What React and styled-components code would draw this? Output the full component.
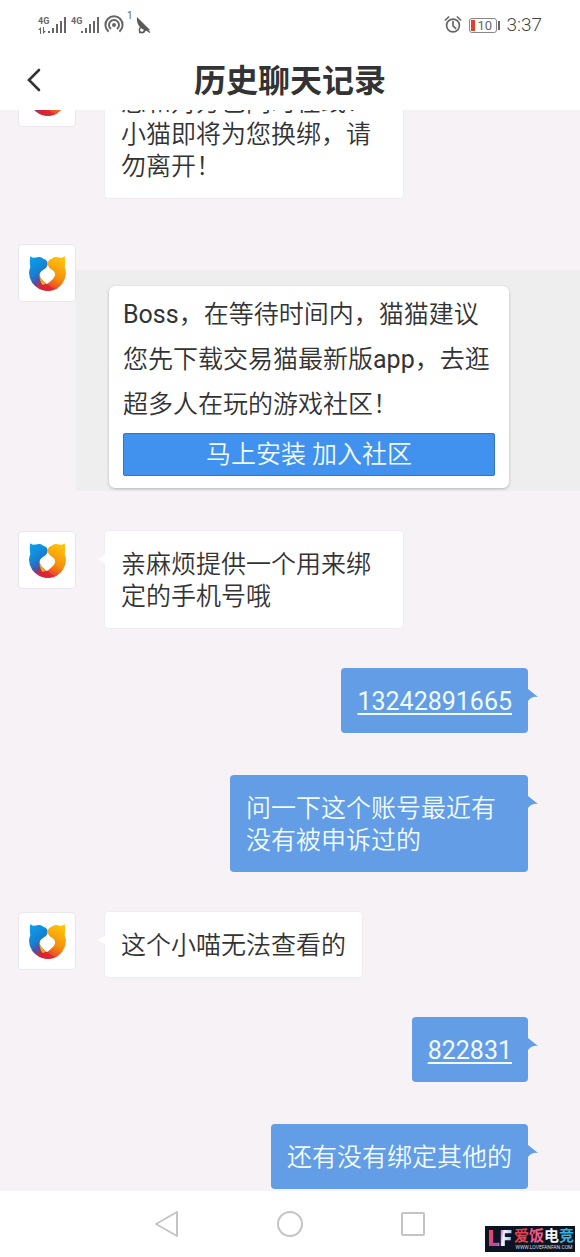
import React from "react";
import styled, { createGlobalStyle } from "styled-components";

const messages = [
  { id: 1, from: "agent", text: "您和对方已同时在线！小猫即将为您换绑，请勿离开！", noTail: true },
  { id: 2, from: "promo" },
  { id: 3, from: "agent", text: "亲麻烦提供一个用来绑定的手机号哦" },
  { id: 4, from: "me", text: "13242891665", link: true },
  { id: 5, from: "me", text: "问一下这个账号最近有没有被申诉过的" },
  { id: 6, from: "agent", text: "这个小喵无法查看的" },
  { id: 7, from: "me", text: "822831", link: true },
  { id: 8, from: "me", text: "还有没有绑定其他的" },
];

function Signal({ arrows }) {
  return (
    <SignalBox>
      <SignalType>
        4G
        <svg width="8" height="7" viewBox="0 0 8 7" fill="#666">
          {arrows && <path d="M2 7V3H0l3-3v7zM5 0v7l3-3H6V0z" />}
        </svg>
      </SignalType>
      <svg width="18" height="18" viewBox="0 0 18 18" fill="#666">
        <rect x="0" y="15" width="2" height="2" />
        <rect x="4" y="12" width="2" height="5" />
        <rect x="8" y="8" width="2" height="9" />
        <rect x="12" y="5" width="2" height="12" />
        <rect x="16" y="1" width="2" height="16" />
      </svg>
    </SignalBox>
  );
}

function HotspotIcon() {
  return (
    <svg width="20" height="20" viewBox="0 0 20 20" fill="none" stroke="#666" strokeWidth="2">
      <circle cx="10" cy="10" r="2" fill="#666" stroke="none" />
      <path d="M7 14a5 5 0 1 1 6 0" />
      <path d="M4.6 16.6a8.6 8.6 0 1 1 10.8 0" />
    </svg>
  );
}

function SatelliteIcon() {
  return (
    <svg width="16" height="18" viewBox="0 0 16 18" fill="#5a5a5a">
      <path d="M1 1 14 14l-3 1C4 13 0 8 1 1z" />
      <circle cx="6" cy="14" r="2.6" fill="none" stroke="#5a5a5a" strokeWidth="1.4" />
      <path d="M3 16.5h4l3-3 4 3" fill="none" stroke="#5a5a5a" strokeWidth="1.4" />
    </svg>
  );
}

function AlarmIcon() {
  return (
    <svg width="18" height="18" viewBox="0 0 18 18" fill="none" stroke="#666" strokeWidth="1.7">
      <circle cx="9" cy="9.5" r="6.4" />
      <path d="M9 5.5v4.4l2.6 2.4M1.4 4 4.6 1M16.6 4l-3.2-3" strokeLinecap="round" />
    </svg>
  );
}

function CatLogo() {
  return (
    <svg width="39" height="37" viewBox="0 0 118 110">
      <defs>
        <linearGradient id="blue" x1="0" y1="0" x2="0.4" y2="1">
          <stop offset="0" stopColor="#0aa4ee" />
          <stop offset="0.55" stopColor="#1680d2" />
          <stop offset="0.8" stopColor="#5a4c9c" />
          <stop offset="0.96" stopColor="#d3243c" />
        </linearGradient>
        <linearGradient id="gold" x1="0.6" y1="0" x2="0.25" y2="1">
          <stop offset="0" stopColor="#fdc20c" />
          <stop offset="0.55" stopColor="#f68f0c" />
          <stop offset="0.85" stopColor="#ea4a28" />
          <stop offset="1" stopColor="#d92238" />
        </linearGradient>
      </defs>
      <path
        fill="url(#blue)"
        d="M7 3 15 7Q24 7 32 5 42 4 46 10 55 11 59 20V30Q56 38 48 43 35 50 35 60 38 74 59 88V107Q30 107 13 84-3 58 7 36 4 18 7 3z"
      />
      <path
        fill="url(#gold)"
        d="M111 3 103 7Q94 7 86 5 76 4 72 10 64 11 60 20V30Q63 38 71 43 83 50 82 60 78 73 48 94L40 103Q82 118 105 84 121 58 111 36 114 18 111 3z"
      />
      <path fill="#fff" d="M47 44Q53 39 59 39 65 39 71 44V50H47z" />
      <path fill="#f3a712" d="M35 60Q34 76 44 90L56 86Q39 74 35 60z" />
      <path fill="#d92238" opacity="0.75" d="M38 102Q44 92 60 86 68 98 82 102 60 112 38 102z" />
    </svg>
  );
}

function ChatAvatar() {
  return (
    <Avatar>
      <CatLogo />
    </Avatar>
  );
}

function Promo() {
  return (
    <PromoRow>
      <ChatAvatar />
      <PromoPanel>
        <PromoCard>
          <PromoText>
            <Latin>Boss</Latin>，在等待时间内，猫猫建议您先下载交易猫最新版<Latin>app</Latin>，去逛超多人在玩的游戏社区！
          </PromoText>
          <PromoButton type="button">马上安装 加入社区</PromoButton>
        </PromoCard>
      </PromoPanel>
    </PromoRow>
  );
}

function Message({ message }) {
  if (message.from === "promo") {
    return <Promo />;
  }
  if (message.from === "me") {
    return (
      <MyRow>
        <MyBubble>
          {message.link ? <NumberLink href={`tel:${message.text}`}>{message.text}</NumberLink> : message.text}
          <MyTail viewBox="0 0 10 12">
            <path d="M0 0 10 8Q4 7 0 12z" fill="#639de5" />
          </MyTail>
        </MyBubble>
      </MyRow>
    );
  }
  return (
    <AgentRow>
      <ChatAvatar />
      <AgentBubble>
        {message.text}
        {!message.noTail && (
          <AgentTail viewBox="0 0 9 14">
            <path d="M9 0Q7 5 0 7q7 2 9 7z" fill="#fff" />
          </AgentTail>
        )}
      </AgentBubble>
    </AgentRow>
  );
}

export default function App() {
  return (
    <Screen>
      <GlobalStyle />
      <StatusBar>
        <StatusGroup>
          <Signal arrows />
          <Signal />
          <HotspotIcon />
          <HotspotCount>1</HotspotCount>
          <SatelliteIcon />
        </StatusGroup>
        <StatusGroup $gap="7px">
          <AlarmIcon />
          <Battery>
            <BatteryLevel />
            10
          </Battery>
          <Clock>3:37</Clock>
        </StatusGroup>
      </StatusBar>
      <Header>
        <BackButton type="button" aria-label="返回">
          <svg width="14" height="24" viewBox="0 0 14 24" fill="none" stroke="#333" strokeWidth="2.6">
            <path d="M12 2 2 12l10 10" strokeLinecap="round" />
          </svg>
        </BackButton>
        <Title>历史聊天记录</Title>
      </Header>
      <Chat>
        <History>
          {messages.map((message) => (
            <Message key={message.id} message={message} />
          ))}
        </History>
      </Chat>
      <NavBar>
        <NavButton type="button" aria-label="后退">
          <svg width="28" height="28" viewBox="0 0 28 28">
            <path d="M24 2v24L3 14z" />
          </svg>
        </NavButton>
        <NavButton type="button" aria-label="主页">
          <svg width="28" height="28" viewBox="0 0 28 28">
            <circle cx="14" cy="14" r="12" />
          </svg>
        </NavButton>
        <NavButton type="button" aria-label="最近任务">
          <svg width="28" height="28" viewBox="0 0 28 28">
            <rect x="3" y="3" width="22" height="22" rx="1" />
          </svg>
        </NavButton>
      </NavBar>
      <Watermark>
        <Monogram>LF</Monogram>
        <WatermarkText>
          <WatermarkName>
            <Glyph $color="#e8404e">爱</Glyph>
            <Glyph $color="#ee5a8c">饭</Glyph>
            <Glyph $color="#f4f4f8">电</Glyph>
            <Glyph $color="#35b4e0">竞</Glyph>
          </WatermarkName>
          <WatermarkUrl>WWW.LOVEFANFAN.COM</WatermarkUrl>
        </WatermarkText>
      </Watermark>
    </Screen>
  );
}

const GlobalStyle = createGlobalStyle`
  * {
    box-sizing: border-box;
  }

  body {
    margin: 0;
    font-family: Roboto, "Noto Sans CJK SC", sans-serif;
    color: #333;
    background-color: #fff;
  }

  button {
    padding: 0;
    border: none;
    background: none;
    font-family: inherit;
    cursor: pointer;
  }

  svg {
    display: block;
    flex: none;
  }
`;

const Screen = styled.div`
  position: relative;
  display: flex;
  flex-direction: column;
  width: 100%;
  height: 100vh;
`;

const StatusBar = styled.div`
  display: flex;
  flex: none;
  justify-content: space-between;
  align-items: center;
  height: 50px;
  padding: 0 38px;
`;

const StatusGroup = styled.div`
  display: flex;
  align-items: center;
  gap: ${(props) => props.$gap || "5px"};
`;

const SignalBox = styled.div`
  display: flex;
  align-items: flex-end;
`;

const SignalType = styled.span`
  display: flex;
  flex-direction: column;
  width: 10px;
  font-size: 9px;
  line-height: 11px;
  font-weight: 700;
  color: #666;
`;

const HotspotCount = styled.span`
  align-self: flex-start;
  margin: -4px -2px 0 -2px;
  font-size: 10px;
  line-height: 10px;
  color: #666;
`;

const Battery = styled.div`
  position: relative;
  display: flex;
  align-items: center;
  gap: 2px;
  width: 28px;
  height: 15px;
  margin-right: 2px;
  padding: 1px;
  border: 1px solid #888;
  border-radius: 3px;
  font-size: 13px;
  color: #666;

  &::after {
    content: "";
    position: absolute;
    right: -4px;
    top: 2px;
    width: 2px;
    height: 9px;
    background-color: #666;
  }
`;

const BatteryLevel = styled.span`
  width: 4px;
  height: 11px;
  background-color: #e0402c;
`;

const Clock = styled.span`
  font-size: 19px;
  line-height: 20px;
  font-weight: 300;
  color: #444;
`;

const Header = styled.header`
  display: grid;
  grid-template-columns: 80px 1fr 80px;
  flex: none;
  align-items: center;
  height: 60px;
`;

const BackButton = styled.button`
  display: flex;
  align-items: center;
  height: 60px;
  padding-left: 27px;
`;

const Title = styled.h1`
  margin: 0;
  padding-top: 2px;
  font-size: 32px;
  line-height: 58px;
  font-weight: 700;
  text-align: center;
`;

const Chat = styled.main`
  display: flex;
  flex-direction: column-reverse;
  flex: 1;
  min-height: 0;
  overflow-y: auto;
  scrollbar-width: none;
  background-color: #f6f2f6;
`;

const History = styled.div`
  display: flex;
  flex-direction: column;
  gap: 40px;
  padding-bottom: 2px;
`;

const AgentRow = styled.div`
  display: flex;
  align-items: flex-start;
  gap: 29px;
  padding: 0 18px;
`;

const MyRow = styled.div`
  display: flex;
  justify-content: flex-end;
  padding: 0 52px;

  & + & {
    margin-top: 2px;
  }
`;

const Avatar = styled.div`
  display: flex;
  flex: none;
  justify-content: center;
  align-items: center;
  width: 58px;
  height: 58px;
  border: 1px solid #ebe7ee;
  border-radius: 4px;
  background-color: #fff;
`;

const Bubble = styled.div`
  position: relative;
  max-width: 298px;
  padding: 18px 16px 15px;
  border-radius: 4px;
  font-size: 25px;
  line-height: 32px;
  font-weight: 350;
`;

const AgentBubble = styled(Bubble)`
  background-color: #fff;
  box-shadow: 0 0 1px 1px #f0ecf2;
`;

const MyBubble = styled(Bubble)`
  color: #f0fbff;
  background-color: #639de5;
`;

const AgentTail = styled.svg`
  position: absolute;
  left: -8px;
  top: 21px;
  width: 9px;
  height: 14px;
`;

const MyTail = styled.svg`
  position: absolute;
  right: -10px;
  top: 21px;
  width: 10px;
  height: 12px;
`;

const NumberLink = styled.a`
  font-weight: 400;
  color: inherit;
  text-underline-offset: 3px;
  text-decoration-thickness: 2px;
`;

const PromoRow = styled.div`
  display: flex;
  align-items: flex-start;
  margin-top: 6px;
  padding-left: 18px;
`;

const PromoPanel = styled.div`
  flex: 1;
  margin-top: 26px;
  padding: 16px 16px 3px 33px;
  background-color: #eee;
`;

const PromoCard = styled.div`
  display: flex;
  flex-direction: column;
  gap: 6px;
  max-width: 400px;
  padding: 6px 14px 12px;
  border-radius: 6px;
  background-color: #fff;
  box-shadow: 0 1px 3px rgba(0, 0, 0, 0.25);
`;

const PromoText = styled.p`
  margin: 0;
  font-size: 25px;
  line-height: 45px;
  font-weight: 350;
`;

const Latin = styled.span`
  font-weight: 400;
`;

const PromoButton = styled.button`
  height: 43px;
  border: 1px solid #2f76c4;
  border-radius: 2px;
  font-size: 25px;
  line-height: 40px;
  font-weight: 350;
  color: #f0fbff;
  background-color: #4191ee;
`;

const NavBar = styled.nav`
  display: flex;
  flex: none;
  justify-content: center;
  align-items: center;
  gap: 95px;
  height: 66px;
`;

const NavButton = styled.button`
  fill: none;
  stroke: #c4c4c4;
  stroke-width: 2;
  stroke-linejoin: round;
`;

const Watermark = styled.div`
  position: absolute;
  right: 5px;
  bottom: 5px;
  display: flex;
  align-items: center;
  width: 90px;
  height: 26px;
  padding: 0 1px;
  background-color: #0b1420;
`;

const Monogram = styled.span`
  width: 28px;
  font-family: Inter, sans-serif;
  font-size: 21px;
  line-height: 26px;
  font-weight: 900;
  text-align: center;
  color: transparent;
  background: linear-gradient(100deg, #f0464c 10%, #b04ac0 45%, #f4f4ff 60%, #6a8cf0 100%);
  background-clip: text;
`;

const WatermarkText = styled.div`
  display: flex;
  flex-direction: column;
  align-items: center;
  width: 60px;
`;

const WatermarkName = styled.div`
  display: flex;
  font-size: 15px;
  line-height: 16px;
  font-weight: 700;
`;

const Glyph = styled.span`
  color: ${(props) => props.$color};
`;

const WatermarkUrl = styled.span`
  font-size: 5px;
  line-height: 6px;
  color: #d8dce4;
`;
